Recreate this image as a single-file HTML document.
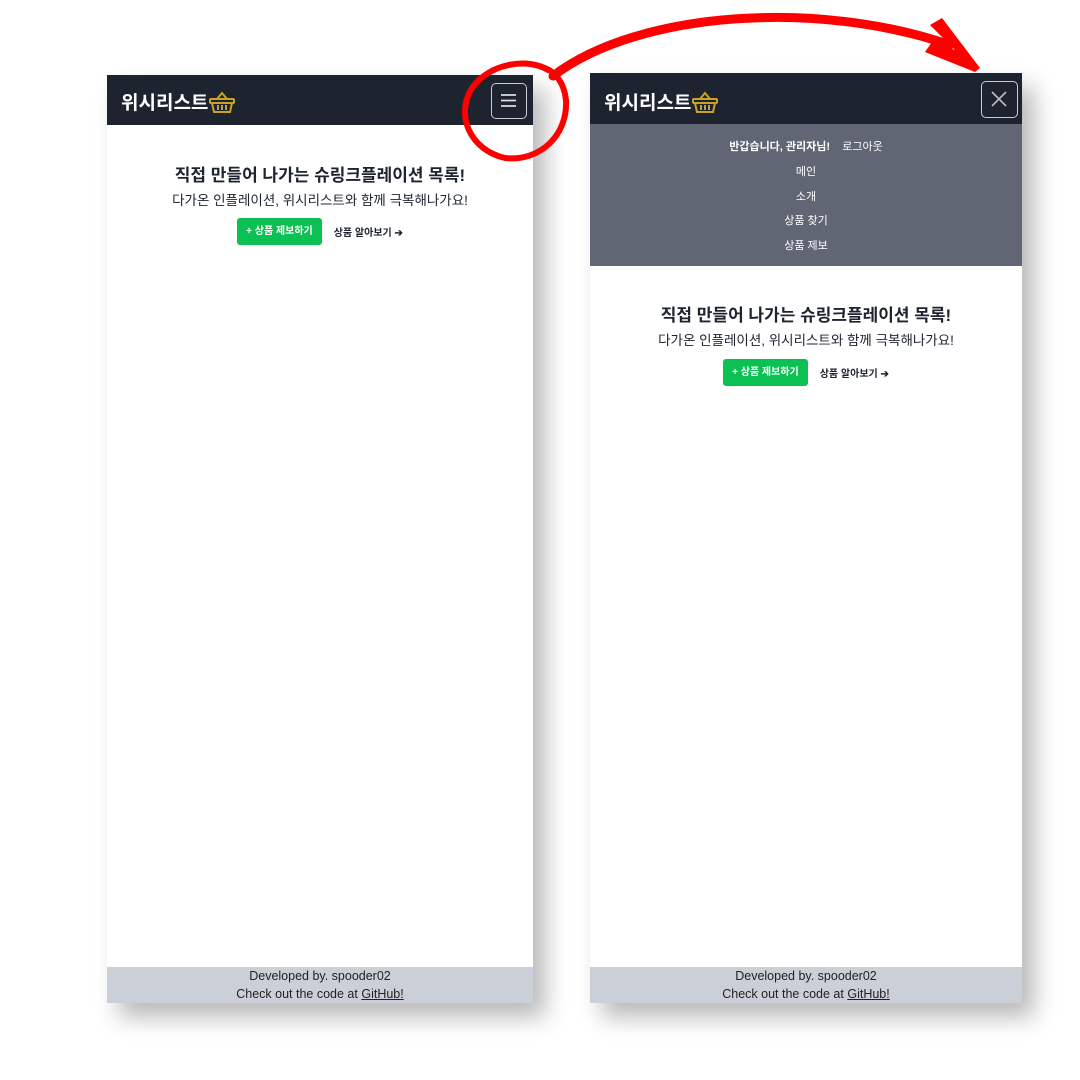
<!DOCTYPE html>
<html><head><meta charset="utf-8"><style>
body{margin:0;width:1080px;height:1080px;background:#fff;position:relative;overflow:hidden;font-family:"Liberation Sans","Noto Sans CJK KR",sans-serif;}
.panel{position:absolute;background:#fff;box-shadow:12px 14px 22px rgba(0,0,0,0.28);}
.hdr{position:absolute;left:0;right:0;top:0;background:#1e2330;}
.logo{position:absolute;left:14px;color:#fff;font-weight:bold;font-size:19px;display:flex;align-items:center;}
.btn{position:absolute;border:1.5px solid #c9ccd2;border-radius:5px;box-sizing:border-box;}
.c{position:absolute;left:0;right:0;text-align:center;color:#1e2330;}
.h1{font-weight:bold;font-size:17px;}
.sub{font-size:13.5px;}
.acts{display:flex;justify-content:center;align-items:center;gap:12px;font-size:10px;font-weight:bold;}
.g{background:#0cc154;color:#fff;border-radius:3px;padding:0 9px;height:27px;line-height:27px;}
.ft{position:absolute;left:0;right:0;bottom:0;height:36px;background:#cbd0d8;text-align:center;font-size:12.5px;color:#222;line-height:18px;}
.menu{position:absolute;left:0;right:0;top:51px;height:142px;background:#616675;color:#fff;text-align:center;font-size:11px;}
.menu div{position:absolute;left:0;right:0;}
</style></head><body>

<div class="panel" style="left:107px;top:75px;width:426px;height:928px;">
 <div class="hdr" style="height:50px;">
  <div class="logo" style="top:13px;">위시리스트<svg width="28" height="24" viewBox="0 0 28 24"><g fill="none" stroke="#c9a227" stroke-width="2"><path d="M9 9 L14 3 L19 9"/><rect x="2" y="9" width="24" height="4" rx="1"/><path d="M4 13 L6 22 H22 L24 13"/><path d="M10 15v5M14 15v5M18 15v5"/></g></svg></div>
  <div class="btn" style="left:384px;top:8px;width:36px;height:36px;"><svg width="33" height="33" viewBox="0 0 33 33"><g stroke="#ddd" stroke-width="1.8"><path d="M9 11h15M9 16.5h15M9 22h15"/></g></svg></div>
 </div>
 <div class="c h1" style="top:86px;">직접 만들어 나가는 슈링크플레이션 목록!</div>
 <div class="c sub" style="top:114px;">다가온 인플레이션, 위시리스트와 함께 극복해나가요!</div>
 <div class="c acts" style="top:143px;"><span class="g">+ 상품 제보하기</span><span style="color:#1e2330">상품 알아보기 ➔</span></div>
 <div class="ft">Developed by. spooder02<br>Check out the code at <u>GitHub!</u></div>
</div>

<div class="panel" style="left:590px;top:73px;width:432px;height:930px;">
 <div class="hdr" style="height:51px;">
  <div class="logo" style="top:15px;">위시리스트<svg width="28" height="24" viewBox="0 0 28 24"><g fill="none" stroke="#c9a227" stroke-width="2"><path d="M9 9 L14 3 L19 9"/><rect x="2" y="9" width="24" height="4" rx="1"/><path d="M4 13 L6 22 H22 L24 13"/><path d="M10 15v5M14 15v5M18 15v5"/></g></svg></div>
  <div class="btn" style="left:391px;top:8px;width:37px;height:37px;"><svg width="34" height="34" viewBox="0 0 34 34"><g stroke="#bbb" stroke-width="1.6"><path d="M10 10L24 24M24 10L10 24"/></g></svg></div>
 </div>
 <div class="menu">
  <div style="top:14px;"><b>반갑습니다, 관리자님!</b> &nbsp;&nbsp;&nbsp;로그아웃</div>
  <div style="top:39px;">메인</div>
  <div style="top:64px;">소개</div>
  <div style="top:88px;">상품 찾기</div>
  <div style="top:113px;">상품 제보</div>
 </div>
 <div class="c h1" style="top:228px;">직접 만들어 나가는 슈링크플레이션 목록!</div>
 <div class="c sub" style="top:256px;">다가온 인플레이션, 위시리스트와 함께 극복해나가요!</div>
 <div class="c acts" style="top:286px;"><span class="g">+ 상품 제보하기</span><span style="color:#1e2330">상품 알아보기 ➔</span></div>
 <div class="ft">Developed by. spooder02<br>Check out the code at <u>GitHub!</u></div>
</div>

<svg style="position:absolute;left:0;top:0" width="1080" height="1080">
 <g fill="none" stroke="#f00" stroke-linecap="round">
  <path d="M548 70 C530 58 490 62 472 88 C455 115 470 150 505 158 C540 162 568 135 566 100 C564 82 555 72 545 68" stroke-width="6"/>
  <path d="M553 76 C640 10 820 0 950 45" stroke-width="9"/>
 </g>
 <path d="M930 25 L942 18 L980 68 L975 72 L925 52 L932 42 L955 50 Z" fill="#f00"/>
</svg>
</body></html>
